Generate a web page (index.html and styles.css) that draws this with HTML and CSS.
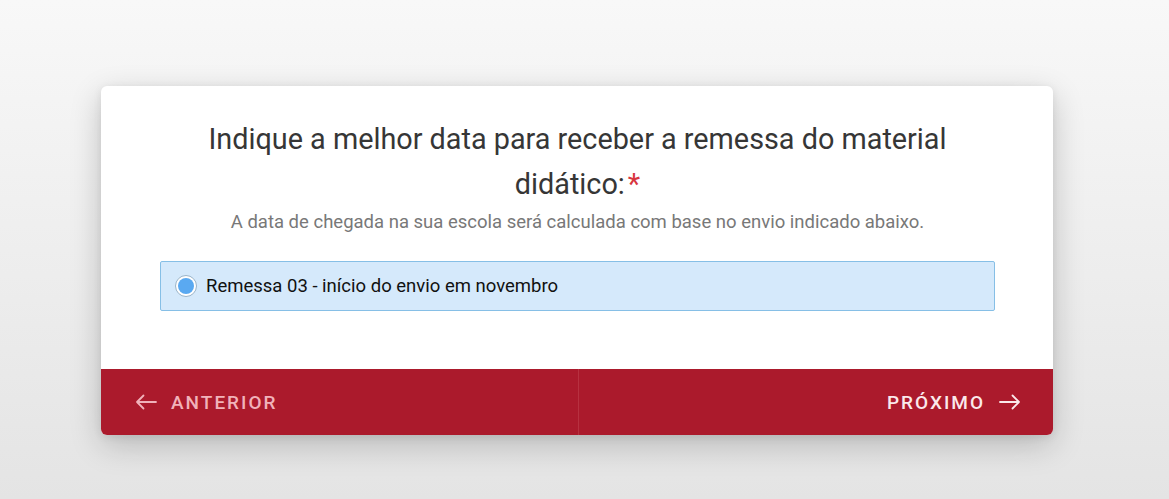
FILE: index.html
```html
<!DOCTYPE html>
<html lang="pt">
<head>
<meta charset="utf-8">
<link rel="stylesheet" href="styles.css">
</head>
<body>
<main class="page">
  <section class="card">
    <div class="body">
      <h1 class="title">Indique a melhor data para receber a remessa do material didático:<span class="req">*</span></h1>
      <p class="hint">A data de chegada na sua escola será calculada com base no envio indicado abaixo.</p>
      <label class="option">
        <span class="radio"><span class="dot"></span></span>
        <span class="label">Remessa 03 - início do envio em novembro</span>
      </label>
    </div>
    <footer class="nav">
      <button class="btn prev">
        <svg width="22" height="16" viewBox="0 0 22 16" fill="none" stroke="currentColor" stroke-width="1.8" stroke-linecap="round" stroke-linejoin="round"><path d="M21 8H2M8.5 1.5L2 8l6.5 6.5"/></svg>
        <span>ANTERIOR</span>
      </button>
      <button class="btn next">
        <span>PRÓXIMO</span>
        <svg width="22" height="16" viewBox="0 0 22 16" fill="none" stroke="currentColor" stroke-width="1.8" stroke-linecap="round" stroke-linejoin="round"><path d="M1 8h19M13.5 1.5L20 8l-6.5 6.5"/></svg>
      </button>
    </footer>
  </section>
</main>
</body>
</html>
```
FILE: styles.css
```css
html, body {
  margin: 0;
  padding: 0;
}
body {
  font-family: Roboto, "Liberation Sans", Arial, sans-serif;
  background: linear-gradient(180deg, #f8f8f8 0%, #f0f0f0 40%, #e4e4e4 100%);
  min-height: 499px;
}
.page {
  padding: 86px 0 0 101px;
  display: flex;
}
.card {
  width: 952px;
  background: #fff;
  border-radius: 6px;
  overflow: hidden;
  box-shadow: 0 10px 32px rgba(0, 0, 0, 0.2), 0 2px 8px rgba(0, 0, 0, 0.08);
}
.body {
  padding: 31px 58px 58px 59px;
  display: flex;
  flex-direction: column;
  align-items: center;
}
.title {
  margin: 0;
  max-width: 800px;
  font-size: 28.8px;
  font-weight: 400;
  line-height: 45px;
  color: #363636;
  text-align: center;
}
.req {
  color: #d8363f;
  margin-left: 3px;
}
.hint {
  margin: 0;
  font-size: 18.5px;
  line-height: 30px;
  color: #787878;
  text-align: center;
}
.option {
  margin-top: 24px;
  align-self: stretch;
  height: 50px;
  box-sizing: border-box;
  display: flex;
  align-items: center;
  gap: 9px;
  padding-left: 14px;
  background: #d5e9fb;
  border: 1px solid #86bfe6;
  border-radius: 2px;
  cursor: pointer;
}
.radio {
  width: 22px;
  height: 22px;
  box-sizing: border-box;
  border-radius: 50%;
  border: 1px solid #9bb4c8;
  background: #fff;
  display: flex;
  align-items: center;
  justify-content: center;
}
.dot {
  width: 16px;
  height: 16px;
  border-radius: 50%;
  background: #5aa9f1;
}
.label {
  font-size: 18.5px;
  color: #111;
}
.nav {
  display: flex;
  height: 66px;
  background: #ab1a2c;
}
.btn {
  flex: 1;
  display: flex;
  align-items: center;
  gap: 14px;
  border: 0;
  background: transparent;
  font-family: inherit;
  font-size: 19px;
  font-weight: 500;
  letter-spacing: 2px;
  cursor: pointer;
}
.prev {
  color: #f1b2ba;
  padding-left: 34px;
  border-right: 1px solid #b73140;
}
.next {
  color: #fbe9eb;
  justify-content: flex-end;
  padding-right: 32px;
}
```
